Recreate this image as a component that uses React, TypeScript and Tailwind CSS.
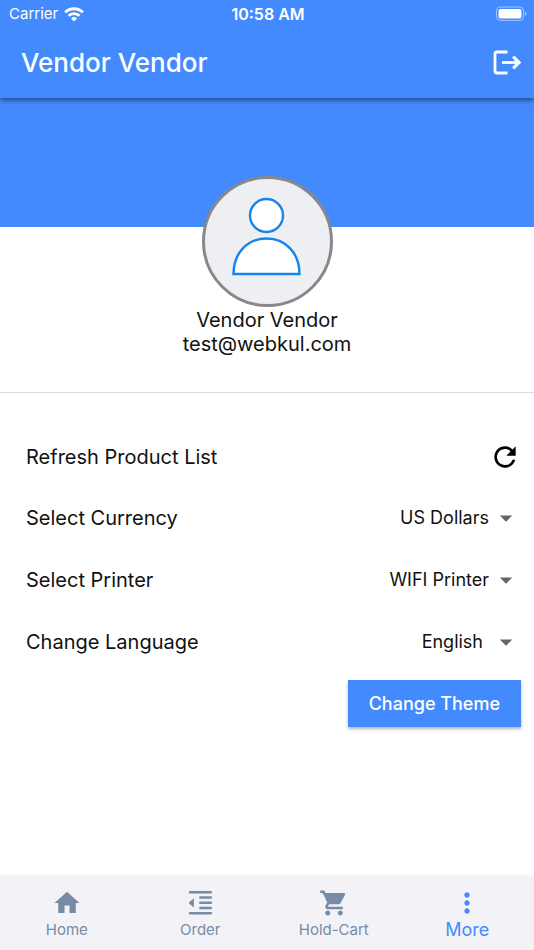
import { useState } from "react";
import {
  MdArrowDropDown,
  MdHome,
  MdMoreVert,
  MdRefresh,
  MdShoppingCart,
} from "react-icons/md";

const settings = [
  {
    id: "currency",
    label: "Select Currency",
    options: ["US Dollars", "Euro"],
    gap: "pr-8",
  },
  {
    id: "printer",
    label: "Select Printer",
    options: ["WIFI Printer", "Bluetooth Printer"],
    gap: "pr-8",
  },
  {
    id: "language",
    label: "Change Language",
    options: ["English", "Arabic"],
    gap: "pr-[38px]",
  },
];

const OrderIcon = () => (
  <svg viewBox="0 0 24 24" className="w-7 h-7" fill="currentColor" aria-hidden="true">
    <rect x="2.4" y="1.8" width="20" height="2.1" rx="1" />
    <rect x="11.2" y="6.3" width="11.2" height="2.1" rx="1" />
    <rect x="11.2" y="10.8" width="11.2" height="2.1" rx="1" />
    <rect x="11.2" y="15.3" width="11.2" height="2.1" rx="1" />
    <rect x="2.4" y="19.8" width="20" height="2.1" rx="1" />
    <path d="M6.8 7.9v8L2.7 12.4a.7.7 0 0 1 0-1z" />
  </svg>
);

const tabs = [
  { name: "Home", icon: <MdHome className="w-[30px] h-[30px]" /> },
  { name: "Order", icon: <OrderIcon /> },
  { name: "Hold-Cart", icon: <MdShoppingCart className="w-[30px] h-[30px]" /> },
  { name: "More", icon: <MdMoreVert className="w-8 h-8" /> },
];

const StatusBar = () => (
  <div className="grid grid-cols-3 items-center h-7 pl-[9px] pr-[7px] text-[15px]">
    <div className="flex items-center gap-1.5">
      <span>Carrier</span>
      <svg viewBox="0 0 20 15" className="w-5 h-[15px]" fill="none" stroke="currentColor" aria-hidden="true">
        <path d="M1.2 5.3a12.6 12.6 0 0 1 17.6 0" strokeWidth="2.9" />
        <path d="M4.5 8.8a7.9 7.9 0 0 1 11 0" strokeWidth="2.7" />
        <path d="M10 14.4 7 11.4a4.3 4.3 0 0 1 6 0z" fill="currentColor" stroke="none" />
      </svg>
    </div>
    <span className="text-center text-base font-semibold">10:58 AM</span>
    <svg viewBox="0 0 32 16" className="justify-self-end w-8 h-4" aria-hidden="true">
      <rect x="1.5" y="1" width="27" height="13.4" rx="3.8" fill="none" stroke="white" strokeOpacity=".5" />
      <rect x="3.5" y="3" width="23" height="9.4" rx="2" fill="white" />
      <path d="M30 5.5c2 .8 2 3.6 0 4.4z" fill="white" fillOpacity=".5" />
    </svg>
  </div>
);

const Header = () => (
  <header className="relative z-10 bg-[#448aff] text-white shadow-[0_2px_5px_rgba(0,0,0,0.5)]">
    <StatusBar />
    <div className="flex items-center justify-between h-[70px] pl-[21px] pr-3 pb-0.5">
      <h1 className="text-[26px] font-medium">Vendor Vendor</h1>
      <button type="button" aria-label="Log out">
        <svg viewBox="0 0 30 28" className="w-[30px] h-7" fill="none" stroke="currentColor" strokeWidth="2.8" aria-hidden="true">
          <path d="M15.5 4H4.5A1.5 1.5 0 0 0 3 5.5v18A1.5 1.5 0 0 0 4.5 25h11" />
          <path d="M10 14.5h17" strokeWidth="2.8" />
          <path d="m21.2 8.7 5.8 5.8-5.8 5.8" strokeWidth="3.2" />
        </svg>
      </button>
    </div>
  </header>
);

const Profile = () => (
  <section className="border-b border-[#dcdcdc] pb-9 text-center">
    <div className="h-[129px] bg-[#448aff]" />
    <div className="relative -mt-[51px] mx-auto w-[131px] h-[131px] rounded-full border-[3px] border-[#888] bg-[#eeeff3]">
      <svg viewBox="0 0 125 125" className="w-full h-full" fill="white" stroke="#1584ee" strokeWidth="2.4" aria-hidden="true">
        <circle cx="61.5" cy="36.5" r="16.5" />
        <path d="M28.5 95c0-21 14-35.5 33-35.5s33 14.5 33 35.5z" />
      </svg>
    </div>
    <p className="text-xl leading-6 mt-px">Vendor Vendor</p>
    <p className="text-xl leading-6">test@webkul.com</p>
  </section>
);

const App = () => {
  const [activeTab, setActiveTab] = useState("More");

  return (
    <div className="flex flex-col min-h-screen bg-white text-[#111] font-['Inter','Liberation_Sans',sans-serif]">
      <Header />
      <main className="flex-1">
        <Profile />
        <section className="pt-[34px] pl-[26px] pr-[13px] pb-6">
          <div className="flex items-center justify-between h-[60px]">
            <span className="text-xl">Refresh Product List</span>
            <button type="button" aria-label="Refresh product list" className="text-black">
              <MdRefresh className="w-8 h-8" />
            </button>
          </div>
          {settings.map((item) => (
            <div key={item.id} className="flex items-center justify-between h-[62px]">
              <label htmlFor={item.id} className="text-xl">
                {item.label}
              </label>
              <div className="relative flex items-center">
                <select
                  id={item.id}
                  className={`appearance-none [field-sizing:content] bg-transparent text-lg leading-6 ${item.gap}`}
                >
                  {item.options.map((option) => (
                    <option key={option}>{option}</option>
                  ))}
                </select>
                <MdArrowDropDown className="absolute right-0 w-[30px] h-[30px] text-[#666] pointer-events-none" />
              </div>
            </div>
          ))}
          <div className="flex justify-end pt-[7px]">
            <button
              type="button"
              className="h-[47px] px-[21px] bg-[#448aff] text-white text-lg font-medium shadow-[0_2px_3px_rgba(0,0,0,0.3)]"
            >
              Change Theme
            </button>
          </div>
        </section>
      </main>
      <nav className="grid grid-cols-4 h-[73px] bg-[#f3f2f7] shadow-[0_-1px_3px_rgba(0,0,0,0.08)]">
        {tabs.map((tab) => (
          <button
            key={tab.name}
            type="button"
            onClick={() => setActiveTab(tab.name)}
            className={`flex flex-col items-center pt-3 ${
              activeTab === tab.name ? "text-[#448aff] text-lg" : "text-[#778ca3] text-[15px]"
            }`}
          >
            <span className="flex items-center justify-center h-7">{tab.icon}</span>
            <span className="leading-[26px]">{tab.name}</span>
          </button>
        ))}
      </nav>
    </div>
  );
};

export default App;
